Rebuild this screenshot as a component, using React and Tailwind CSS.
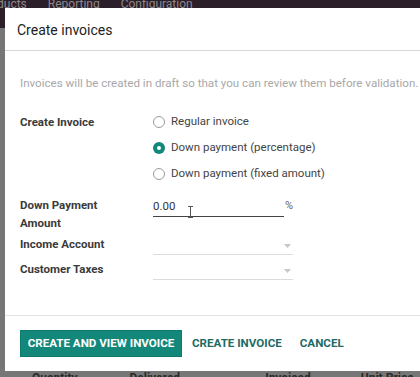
import React from 'react';

function Radio({ checked, label }) {
  return (
    <div className="flex items-center h-[26px]">
      <span
        className={`w-[12px] h-[12px] rounded-full flex items-center justify-center ${checked ? 'bg-[#12877a]' : 'border border-[#9a9a9a] bg-white'}`}
      >
        {checked && <span className="w-[4px] h-[4px] rounded-full bg-white" />}
      </span>
      <span className="ml-[6px] text-[11.5px] text-[#444]">{label}</span>
    </div>
  );
}

function Caret() {
  return (
    <svg width="7" height="4" viewBox="0 0 7 4" className="mb-[6px]">
      <path d="M0 0 L7 0 L3.5 4 Z" fill="#c8c8c8" />
    </svg>
  );
}

export default function App() {
  return (
    <div className="relative w-[420px] h-[377px] overflow-hidden bg-[#767676] font-['Roboto',sans-serif]">
      {/* page behind the dialog */}
      <div className="h-[28px] bg-[#2b2029] flex items-start text-[12px] text-[#8e878c] leading-none">
        <span className="-mt-[2px] -ml-[3px]">ducts</span>
        <span className="-mt-[2px] ml-[21px]">Reporting</span>
        <span className="-mt-[2px] ml-[21px]">Configuration</span>
      </div>
      <div className="absolute left-0 top-[372px] w-full flex text-[12px] text-[#2a2a2a] font-bold leading-none">
        <span className="ml-[32px]">Quantity</span>
        <span className="ml-[52px]">Delivered</span>
        <span className="ml-[85px]">Invoiced</span>
        <span className="ml-[50px]">Unit Price</span>
      </div>

      {/* dialog */}
      <div className="absolute left-[5px] top-[8px] w-[440px] h-[363px] bg-white flex flex-col">
        <div className="h-[43px] border-b border-[#d6d6d6] flex items-center pl-[12px]">
          <h4 className="text-[14px] text-[#222] leading-none pt-[1px]">Create invoices</h4>
        </div>

        <div className="flex-1 pl-[15px] pt-[23px]">
          <p className="text-[11.6px] text-[#a8a8a8] leading-[18px] whitespace-nowrap">
            Invoices will be created in draft so that you can review them before validation.
          </p>

          <div className="flex mt-[17px]">
            <div className="w-[133px] text-[11.5px] font-bold text-[#3a3a3a] leading-[26px]">Create Invoice</div>
            <div className="flex flex-col">
              <Radio label="Regular invoice" />
              <Radio checked label="Down payment (percentage)" />
              <Radio label="Down payment (fixed amount)" />
            </div>
          </div>

          <div className="flex mt-[9px]">
            <div className="w-[133px] text-[11.5px] font-bold text-[#3a3a3a] leading-[18px]">
              Down Payment
              <br />
              Amount
            </div>
            <div className="flex items-start">
              <div className="relative w-[131px] h-[21px] border-b border-[#444] text-[11.5px] text-[#333] leading-[20px]">
                0.00
                <svg width="7" height="12" viewBox="0 0 7 12" className="absolute left-[34px] top-[10px]">
                  <path d="M1 0.5 H6 M3.5 0.5 V11.5 M1 11.5 H6" stroke="#555" strokeWidth="1" fill="none" />
                </svg>
              </div>
              <span className="ml-[1px] text-[11px] text-[#666] leading-[20px]">%</span>
            </div>
          </div>

          <div className="flex mt-[3px]">
            <div className="w-[133px] text-[11.5px] font-bold text-[#3a3a3a] leading-[18px]">Income Account</div>
            <div className="w-[140px] h-[20px] border-b border-[#dcdcdc] flex items-end justify-end pr-[2px]">
              <Caret />
            </div>
          </div>

          <div className="flex mt-[5px]">
            <div className="w-[133px] text-[11.5px] font-bold text-[#3a3a3a] leading-[18px]">Customer Taxes</div>
            <div className="w-[140px] h-[20px] border-b border-[#dcdcdc] flex items-end justify-end pr-[2px]">
              <Caret />
            </div>
          </div>
        </div>

        <div className="h-[56px] border-t border-[#e3e3e3] flex items-start pt-[14px] pl-[15px]">
          <button className="h-[27px] w-[162px] bg-[#12877a] border border-[#0f7a6e] text-white text-[11.6px] font-bold uppercase">
            Create and view invoice
          </button>
          <button className="h-[27px] ml-[10px] text-[#1f6b66] text-[11.6px] font-bold uppercase">
            Create invoice
          </button>
          <button className="h-[27px] ml-[18px] text-[#1f6b66] text-[11.6px] font-bold uppercase">
            Cancel
          </button>
        </div>
      </div>
    </div>
  );
}
